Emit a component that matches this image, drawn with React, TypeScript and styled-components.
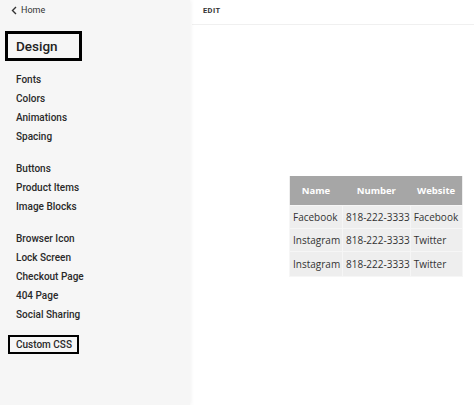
import React from "react";
import styled, { createGlobalStyle } from "styled-components";

const Global = createGlobalStyle`
  html, body { margin: 0; padding: 0; background: #fff; }
  body { font-family: Roboto, "Liberation Sans", sans-serif; }
`;

const Page = styled.div`
  display: flex;
  width: 474px;
  height: 405px;
  overflow: hidden;
`;

const Sidebar = styled.aside`
  width: 190px;
  flex: none;
  background: #f6f6f6;
  box-shadow: 1px 0 4px rgba(0, 0, 0, 0.06);
  display: flex;
  flex-direction: column;
  position: relative;
  z-index: 1;
`;

const HomeLink = styled.div`
  display: flex;
  align-items: center;
  gap: 3px;
  height: 20px;
  padding-left: 11px;
  font-size: 9px;
  color: #333;
`;

const TitleBox = styled.div`
  margin: 11px 0 0 5px;
  width: 63px;
  height: 24px;
  border: 3px solid #000;
  display: flex;
  align-items: center;
  padding-left: 8px;
  font-size: 13.5px;
  font-weight: 500;
  color: #222;
`;

const Group = styled.div<{ $gap?: number }>`
  display: flex;
  flex-direction: column;
  margin-top: ${(p) => p.$gap ?? 13}px;
`;

const Item = styled.div`
  height: 19px;
  line-height: 19px;
  padding-left: 16px;
  font-size: 10px;
  font-weight: 500;
  color: #2a2a2a;
`;

const BoxItem = styled.div`
  margin: 11px 0 0 8px;
  width: 61px;
  height: 15px;
  border: 2px solid #000;
  padding-left: 6px;
  line-height: 15px;
  font-size: 10px;
  font-weight: 500;
  color: #2a2a2a;
`;

const Main = styled.main`
  flex: 1;
  display: flex;
  flex-direction: column;
`;

const TopBar = styled.div`
  height: 25px;
  margin-left: 2px;
  border-bottom: 1px solid #f0f0f0;
  display: flex;
  align-items: center;
  padding-left: 11px;
  padding-bottom: 4px;
  box-sizing: border-box;
  font-size: 7.5px;
  font-weight: 700;
  letter-spacing: 0.4px;
  color: #333;
`;

const Content = styled.div`
  padding: 151px 0 0 99px;
`;

const Table = styled.table`
  border-collapse: collapse;
  font-family: "Open Sans", "Liberation Sans", sans-serif;
  font-size: 10px;
  background: #eeeeee;
`;

const Th = styled.th<{ $w: number }>`
  width: ${(p) => p.$w}px;
  height: 29px;
  padding: 0;
  background: #a6a6a6;
  color: #fff;
  font-weight: 700;
  font-size: 9.5px;
  text-align: center;
  box-sizing: border-box;
`;

const Td = styled.td<{ $h: number }>`
  height: ${(p) => p.$h}px;
  padding: 0 0 0 3px;
  color: #333;
  white-space: nowrap;
  border: 1px solid #f6f6f6;
  box-sizing: border-box;
`;

const rows = [
  ["Facebook", "818-222-3333", "Facebook"],
  ["Instagram", "818-222-3333", "Twitter"],
  ["Instagram", "818-222-3333", "Twitter"],
];

export default function App() {
  return (
    <>
      <Global />
      <Page>
        <Sidebar>
          <HomeLink>
            <svg width="7" height="9" viewBox="0 0 7 9">
              <path d="M5 1 L1.5 4.5 L5 8" stroke="#333" strokeWidth="1.4" fill="none" />
            </svg>
            Home
          </HomeLink>
          <TitleBox>Design</TitleBox>
          <Group $gap={9}>
            <Item>Fonts</Item>
            <Item>Colors</Item>
            <Item>Animations</Item>
            <Item>Spacing</Item>
          </Group>
          <Group>
            <Item>Buttons</Item>
            <Item>Product Items</Item>
            <Item>Image Blocks</Item>
          </Group>
          <Group>
            <Item>Browser Icon</Item>
            <Item>Lock Screen</Item>
            <Item>Checkout Page</Item>
            <Item>404 Page</Item>
            <Item>Social Sharing</Item>
          </Group>
          <BoxItem>Custom CSS</BoxItem>
        </Sidebar>
        <Main>
          <TopBar>EDIT</TopBar>
          <Content>
            <Table>
              <thead>
                <tr>
                  <Th $w={53}>Name</Th>
                  <Th $w={67}>Number</Th>
                  <Th $w={52}>Website</Th>
                </tr>
              </thead>
              <tbody>
                {rows.map((r, i) => (
                  <tr key={i}>
                    {r.map((c, j) => (
                      <Td key={j} $h={i === 2 ? 25 : 23}>
                        {c}
                      </Td>
                    ))}
                  </tr>
                ))}
              </tbody>
            </Table>
          </Content>
        </Main>
      </Page>
    </>
  );
}
